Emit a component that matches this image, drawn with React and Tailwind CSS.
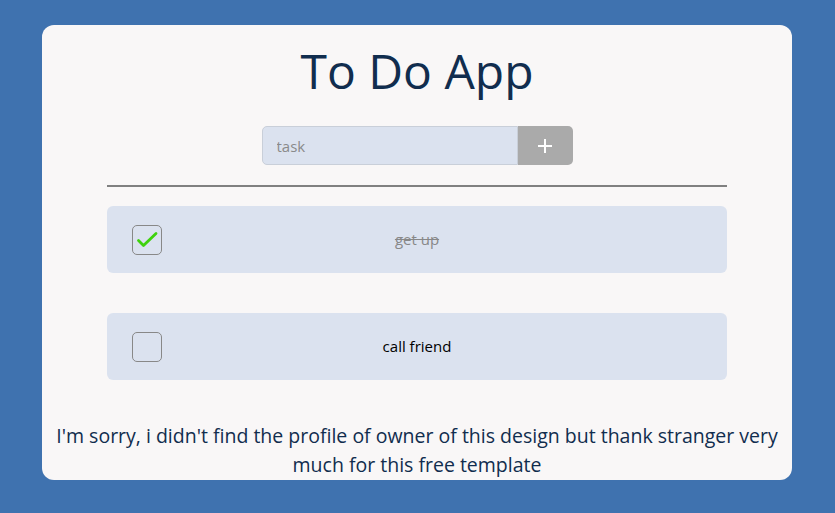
import React, { useState } from "react";

const font = { fontFamily: '"Open Sans", "Noto Sans", sans-serif' };

function Check() {
  return (
    <svg viewBox="0 0 28 28" className="h-[28px] w-[28px]">
      <path d="M5.5 14.5 L10.5 19.5 L23 7.5" fill="none" stroke="#3fd20d" strokeWidth="2.8" strokeLinecap="round" strokeLinejoin="round" />
    </svg>
  );
}

function Todo({ text, done }) {
  return (
    <div className="grid h-[67px] grid-cols-[55px_1fr_55px] items-center rounded-md bg-[#dbe2ef]">
      <div className="ml-[25px] flex h-[30px] w-[30px] items-center justify-center rounded-[5px] border border-[#888888]">
        {done && <Check />}
      </div>
      <div className={`text-center text-[15px] ${done ? "text-[#888888] line-through" : "text-black"}`}>{text}</div>
      <div />
    </div>
  );
}

export default function App() {
  const [todos] = useState([
    { text: "get up", done: true },
    { text: "call friend", done: false },
  ]);

  return (
    <div className="min-h-[513px] bg-[#3f72af] pt-[25px]" style={font}>
      <div className="ml-[42px] h-[455px] w-[750px] rounded-xl bg-[#f9f7f7] pt-[22px]">
        <h1 className="text-center text-[48px] leading-[1] text-[#112d4e]">To Do App</h1>
        <form className="mx-auto mt-[31px] flex h-[39px] w-[311px]">
          <input
            placeholder="task"
            className="h-full w-[256px] rounded-l-[5px] border border-[#c9cfd9] bg-[#dbe2ef] px-[14px] text-[15px] text-[#112d4e] outline-none placeholder:text-[#8a8a8a]"
          />
          <button type="button" className="flex h-full flex-1 items-center justify-center rounded-r-[5px] bg-[#aaaaaa]">
            <svg viewBox="0 0 16 16" className="h-[16px] w-[16px]">
              <path d="M8 1 V15 M1 8 H15" stroke="#ffffff" strokeWidth="2" />
            </svg>
          </button>
        </form>
        <div className="mx-auto mt-[20px] h-[2px] w-[620px] bg-[#808080]" />
        <div className="mx-auto mt-[19px] flex w-[620px] flex-col gap-[40px]">
          {todos.map((t) => (
            <Todo key={t.text} {...t} />
          ))}
        </div>
        <p className="mt-[41px] px-[10px] text-center text-[19.5px] leading-[29px] text-[#112d4e]">
          I'm sorry, i didn't find the profile of owner of this design but thank stranger very much for this free template
        </p>
      </div>
    </div>
  );
}
